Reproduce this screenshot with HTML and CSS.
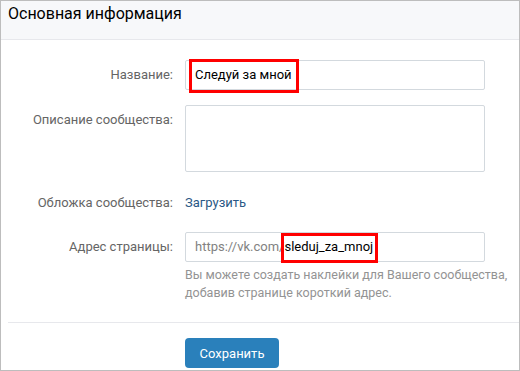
FILE: index.html
```html
<!DOCTYPE html>
<html lang="ru">
<head>
<meta charset="utf-8">
<link rel="stylesheet" href="styles.css">
</head>
<body>
<div class="frame">
  <div class="header">Основная информация</div>
  <div class="form">
    <div class="row row-name">
      <div class="label">Название:</div>
      <div class="field">
        <div class="input">Следуй за мной</div>
        <span class="mark mark-name"></span>
      </div>
    </div>
    <div class="row row-desc">
      <div class="label label-top">Описание сообщества:</div>
      <div class="field">
        <div class="textarea"></div>
      </div>
    </div>
    <div class="row row-cover">
      <div class="label">Обложка сообщества:</div>
      <div class="field"><a class="link">Загрузить</a></div>
    </div>
    <div class="row row-addr">
      <div class="label">Адрес страницы:</div>
      <div class="field">
        <div class="input"><span class="prefix">https://vk.com/</span>sleduj_za_mnoj</div>
        <span class="mark mark-addr"></span>
      </div>
    </div>
    <div class="row row-hint">
      <div class="label"></div>
      <div class="hint">Вы можете создать наклейки для Вашего сообщества,<br>добавив странице короткий адрес.</div>
    </div>
  </div>
  <div class="sep"></div>
  <div class="row row-btn">
    <div class="label"></div>
    <div class="field"><button class="btn">Сохранить</button></div>
  </div>
</div>
</body>
</html>
```
FILE: styles.css
```css
* { box-sizing: border-box; }
html, body { margin: 0; padding: 0; background: #fff; }
body { font-family: Roboto, "Open Sans", "DejaVu Sans", sans-serif; font-size: 13px; }
.frame {
  width: 520px;
  height: 371px;
  border: 1px solid #bdbdbd;
  overflow: hidden;
  background: #fff;
}
.header {
  height: 39px;
  background: #f7f8fa;
  border-bottom: 1px solid #e7e8ec;
  padding: 3px 7px 0;
  font-size: 16px;
  line-height: 20px;
  color: #000;
}
.form { padding-top: 20px; }
.row {
  display: grid;
  grid-template-columns: 172px 1fr;
  column-gap: 12px;
}
.label {
  text-align: right;
  color: #656565;
  line-height: 18px;
  align-self: center;
}
.label-top { align-self: start; padding-top: 6px; }
.field { position: relative; width: 300px; }
.input {
  height: 30px;
  border: 1px solid #d3d9de;
  border-radius: 2px;
  padding: 0 9px;
  line-height: 28px;
  color: #000;
}
.prefix { color: #828282; }
.textarea {
  height: 67px;
  border: 1px solid #d3d9de;
  border-radius: 2px;
}
.row-desc { margin-top: 15px; }
.row-cover { margin-top: 22px; }
.row-addr { margin-top: 20px; }
.row-hint { margin-top: 4px; }
.link { color: #2a5885; line-height: 18px; text-decoration: none; }
.hint { color: #939393; font-size: 12.5px; line-height: 18px; white-space: nowrap; }
.mark {
  position: absolute;
  border: 3px solid #f00;
}
.mark-name { left: 4px; top: -1px; width: 110px; height: 34px; }
.mark-addr { left: 96px; top: 1px; width: 97px; height: 30px; }
.sep {
  height: 1px;
  background: #e7e8ec;
  margin: 20px 0 0 7px;
}
.row-btn { margin-top: 15px; }
.btn {
  width: 94px;
  height: 30px;
  border: 0;
  border-radius: 4px;
  background: #2a80bb;
  color: #fff;
  font-family: inherit;
  font-size: 13px;
  padding: 0;
  cursor: pointer;
}
```
